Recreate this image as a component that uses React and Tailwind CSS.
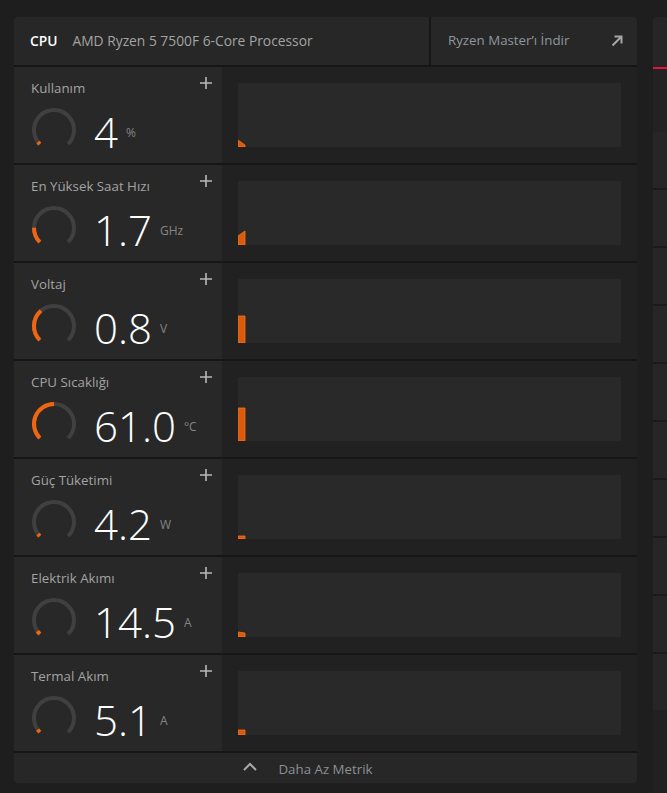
import React from 'react';

const metrics = [
  { label: 'Kullanım', value: '4', unit: '%', gauge: 0.03, bar: '0,57 7,62 7,64 0,64' },
  { label: 'En Yüksek Saat Hızı', value: '1.7', unit: 'GHz', gauge: 0.17, bar: '0,55 7,50 7,64 0,64' },
  { label: 'Voltaj', value: '0.8', unit: 'V', gauge: 0.35, bar: '0,37 7,37 7,64 0,64' },
  { label: 'CPU Sıcaklığı', value: '61.0', unit: '°C', gauge: 0.5, bar: '0,31 7,31 7,64 0,64' },
  { label: 'Güç Tüketimi', value: '4.2', unit: 'W', gauge: 0.03, bar: '0,61 7,61 7,64 0,64' },
  { label: 'Elektrik Akımı', value: '14.5', unit: 'A', gauge: 0.04, bar: '0,59 7,60 7,64 0,64' },
  { label: 'Termal Akım', value: '5.1', unit: 'A', gauge: 0.035, bar: '0,59 7,59 7,64 0,64' },
];

// point on the gauge circle, angle in degrees clockwise from top
const pt = (deg) => {
  const r = (deg * Math.PI) / 180;
  return [24 + 20 * Math.sin(r), 24 - 20 * Math.cos(r)];
};

const Gauge = ({ fraction }) => {
  const [sx, sy] = pt(-135);
  const [ex, ey] = pt(135);
  const sweep = 270 * fraction;
  const [px, py] = pt(-135 + sweep);
  return (
    <svg width="48" height="48" viewBox="0 0 48 48" className="shrink-0">
      <path d={`M ${sx} ${sy} A 20 20 0 1 1 ${ex} ${ey}`} fill="none" stroke="#404040" strokeWidth="4" />
      <path
        d={`M ${sx} ${sy} A 20 20 0 ${sweep > 180 ? 1 : 0} 1 ${px} ${py}`}
        fill="none"
        stroke="#f2650f"
        strokeWidth="4"
      />
    </svg>
  );
};

const MetricRow = ({ m }) => (
  <div className="flex h-[96px]">
    <div className="relative w-[208px] shrink-0 bg-[#282828]">
      <div className="pl-[17px] pt-[12px] text-[13.3px] leading-[18px] text-[#a3a3a3]">{m.label}</div>
      <svg width="14" height="14" viewBox="0 0 14 14" className="absolute right-[9px] top-[9px]">
        <path d="M7 1v12M1 7h12" stroke="#b8b8b8" strokeWidth="1.6" />
      </svg>
      <div className="mt-[9px] flex items-center pl-[16px]">
        <Gauge fraction={m.gauge} />
        <span className="ml-[16px] mt-[3px] text-[42px] font-light leading-none text-white">{m.value}</span>
        <span className="ml-[8px] mt-[6px] text-[12px] text-[#858585]">{m.unit}</span>
      </div>
    </div>
    <div className="flex-1 bg-[#212121] p-[16px]">
      <div className="h-[64px] bg-[#292929]">
        <svg width="100%" height="64" viewBox="0 0 383 64" preserveAspectRatio="none">
          <polygon points={m.bar} fill="#dc5a0c" stroke="#f4731c" strokeWidth="0.8" />
        </svg>
      </div>
    </div>
  </div>
);

export default function App() {
  return (
    <div className="flex h-[793px] w-[667px] gap-[16px] overflow-hidden bg-[#1e1e1e] pl-[14px] pt-[17px] font-['Open_Sans',sans-serif]">
      <div className="flex h-[766px] w-[623px] shrink-0 flex-col gap-[2px] overflow-hidden rounded bg-[#161616]">
        {/* Header */}
        <div className="flex h-[48px] shrink-0 gap-[2px]">
          <div className="flex flex-1 items-center bg-[#272727] pl-[16px] text-[13.8px]">
            <span className="font-semibold text-white">CPU</span>
            <span className="ml-[15px] text-[#a3a3a3]">AMD Ryzen 5 7500F 6-Core Processor</span>
          </div>
          <div className="flex w-[206px] items-center justify-between bg-[#272727] pl-[17px] pr-[14px] text-[13.3px] text-[#8f969c]">
            <span>Ryzen Master’ı İndir</span>
            <svg width="12" height="12" viewBox="0 0 12 12">
              <path d="M1.5 10.5L10 2M3.5 1.5h7v7" fill="none" stroke="#a6a6a6" strokeWidth="2" />
            </svg>
          </div>
        </div>

        {metrics.map((m) => (
          <MetricRow key={m.label} m={m} />
        ))}

        {/* Footer */}
        <div className="flex h-[30px] shrink-0 items-center justify-center bg-[#272727]">
          <div className="relative">
            <svg width="16" height="10" viewBox="0 0 16 10" className="absolute left-[-36px] top-[6px]">
              <path d="M2 8l6-6 6 6" fill="none" stroke="#a8a8a8" strokeWidth="2" />
            </svg>
            <span className="text-[13.3px] text-[#8a9096]">Daha Az Metrik</span>
          </div>
        </div>
      </div>

      {/* next card, cut off at the window edge */}
      <div className="flex w-[20px] shrink-0 flex-col overflow-hidden rounded-tl bg-[#212121]">
        <div className="h-[50px] shrink-0 bg-[#262626]" />
        <div className="h-[2px] shrink-0 bg-[#e0143c]" />
        <div className="h-[63px] shrink-0 bg-[#222222]" />
        <div className="flex flex-col gap-[2px] bg-[#1a1a1a]">
          {Array.from({ length: 10 }).map((_, i) => (
            <div key={i} className="h-[56px] bg-[#262626]" />
          ))}
        </div>
      </div>
    </div>
  );
}
